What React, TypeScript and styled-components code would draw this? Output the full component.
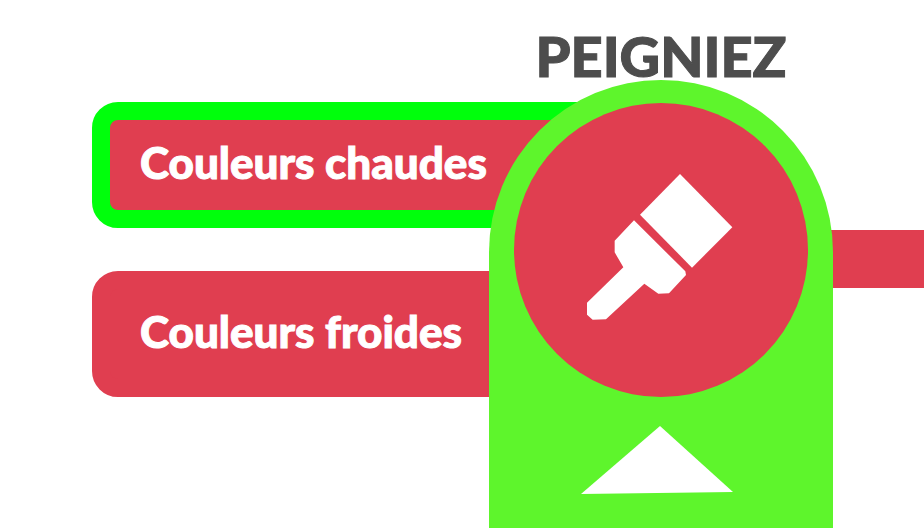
import React from "react";
import styled, { createGlobalStyle } from "styled-components";

const RED = "#e03e50";
const GREEN = "#5ef52c";
const OUTLINE = "#00ff0c";

const GlobalStyle = createGlobalStyle`
  *, *::before { box-sizing: border-box; }
  body { margin: 0; background: #fff; font-family: Lato, "Open Sans", sans-serif; }
  button { font: inherit; color: inherit; border: 0; margin: 0; cursor: pointer; }
`;

const Page = styled.main`
  display: grid;
  grid-template-columns: minmax(0, 489fr) 344px minmax(0, 91fr);
  min-height: 100vh;
  overflow: hidden;
`;

const Choices = styled.div`
  display: flex;
  flex-direction: column;
  gap: 43px;
  padding-top: 102px;
  margin-left: 92px;
  margin-right: -120px;
`;

const Choice = styled.button<{ $selected?: boolean }>`
  height: 126px;
  padding: 0 32px 6px 30px;
  border: 18px solid ${(p) => (p.$selected ? OUTLINE : RED)};
  border-radius: 26px;
  background: ${RED};
  color: #fff;
  font-size: 44px;
  font-weight: 900;
  line-height: 48px;
  text-align: left;
  white-space: nowrap;
  -webkit-text-stroke: 1px currentColor;
`;

const Station = styled.section`
  position: relative;
  z-index: 1;
  display: flex;
  flex-direction: column;
`;

const Title = styled.h1`
  margin: 0;
  padding-top: 24px;
  height: 80px;
  color: #4d4d4d;
  font-size: 56px;
  font-weight: 900;
  line-height: 64px;
  text-align: center;
  -webkit-text-stroke: 1px currentColor;
`;

const Arch = styled.div`
  flex: 1;
  display: flex;
  flex-direction: column;
  align-items: center;
  gap: 29px;
  padding: 23px 0 34px;
  border-radius: 172px 172px 0 0;
  background: ${GREEN};
`;

const Disc = styled.button`
  display: grid;
  place-items: center;
  flex: none;
  width: 294px;
  height: 294px;
  padding: 0;
  border-radius: 50%;
  background: ${RED};
`;

const ArrowButton = styled.button`
  display: flex;
  padding: 0;
  background: none;
`;

const Track = styled.div`
  height: 58px;
  margin-top: 230px;
  margin-left: -12px;
  background: ${RED};
`;

function Brush() {
  return (
    <svg width="160" height="160" viewBox="33 30 480 480" fill="#fff" aria-hidden="true">
      <path d="M330 42 487 202 366 323 210 164Z" />
      <path d="M192 181 346 334 348 345 297 400 265 401 223 371 108 478 68 479 51 464 51 428 160 322 134 277 134 242Z" />
    </svg>
  );
}

function Arrow() {
  return (
    <svg width="160" height="68" viewBox="0 0 160 68" fill="#fff" aria-hidden="true">
      <path d="M79 0 152 66 0 68Z" />
    </svg>
  );
}

const choices = [
  { label: "Couleurs chaudes", selected: true },
  { label: "Couleurs froides", selected: false },
];

export default function App() {
  return (
    <>
      <GlobalStyle />
      <Page>
        <Choices>
          {choices.map((c) => (
            <Choice key={c.label} type="button" $selected={c.selected} aria-pressed={c.selected}>
              {c.label}
            </Choice>
          ))}
        </Choices>
        <Station>
          <Title>PEIGNIEZ</Title>
          <Arch>
            <Disc type="button" aria-label="Pinceau">
              <Brush />
            </Disc>
            <ArrowButton type="button" aria-label="Monter">
              <Arrow />
            </ArrowButton>
          </Arch>
        </Station>
        <Track />
      </Page>
    </>
  );
}
